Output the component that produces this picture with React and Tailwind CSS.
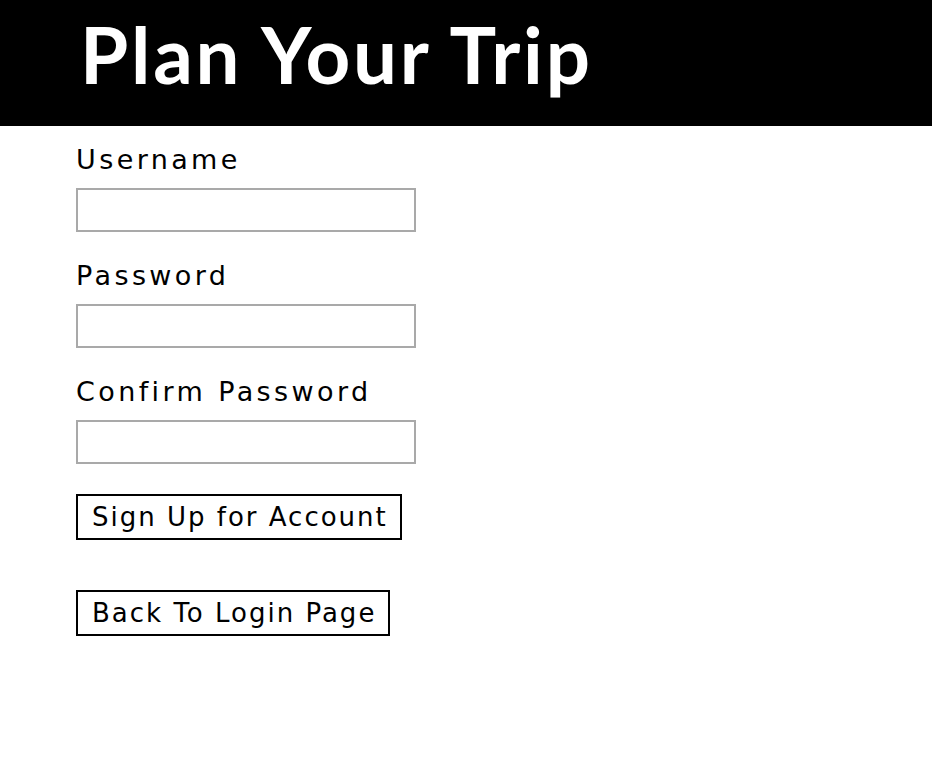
import React from "react";

// Sign up page for the trip planner
const App = () => {
  return (
    <div className="min-h-screen bg-white text-black">
      {/* Header bar */}
      <div className="flex h-[126px] items-center bg-black pb-[18px] pl-[80px]">
        <h1 className="font-['Lato',sans-serif] text-[78px] font-bold leading-none tracking-[2.8px] text-white">
          Plan Your Trip
        </h1>
      </div>

      {/* Sign up form */}
      <form className="flex flex-col items-start pl-[76px] pt-[18px] font-['DejaVu_Sans',sans-serif]">
        <Field label="Username" />
        <Field label="Password" />
        <Field label="Confirm Password" />
        <button
          type="button"
          className="mt-[2px] h-[46px] border-2 border-black bg-white pl-[14px] pr-[12px] text-[26px] leading-none tracking-[2px]"
        >
          Sign Up for Account
        </button>
        <button
          type="button"
          className="mt-[50px] h-[46px] border-2 border-black bg-white pl-[14px] pr-[12px] text-[26px] leading-none tracking-[2px]"
        >
          Back To Login Page
        </button>
      </form>
    </div>
  );
};

// Label with a text box under it
const Field = ({ label }) => {
  return (
    <div className="mb-[28px] flex flex-col items-start">
      <label className="h-[32px] text-[27px] leading-[32px] tracking-[3.4px]">
        {label}
      </label>
      <input
        type="text"
        className="mt-[12px] h-[44px] w-[340px] border-2 border-[#a9a9a9] bg-white"
      />
    </div>
  );
};

export default App;
